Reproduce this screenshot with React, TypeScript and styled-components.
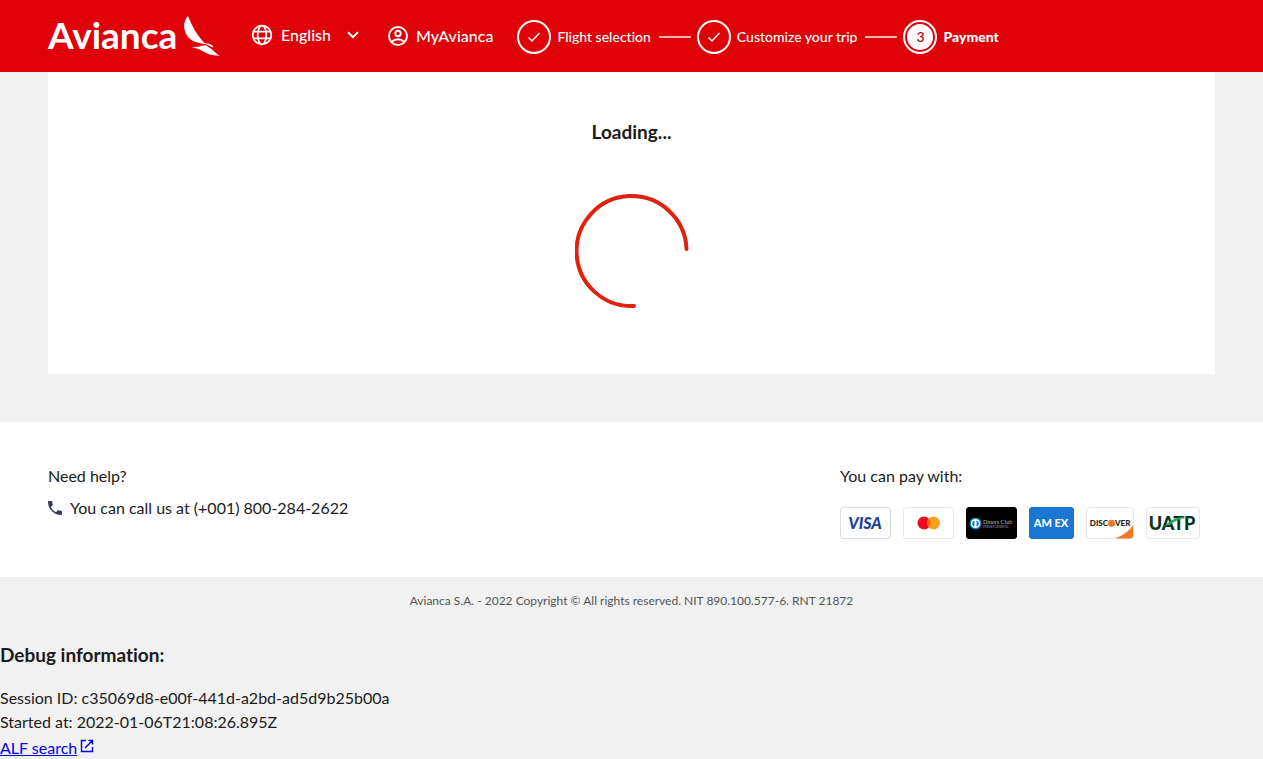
import React from "react";
import styled, { createGlobalStyle, css } from "styled-components";

const GlobalStyle = createGlobalStyle`
  *, *::before, *::after { box-sizing: border-box; }
  body {
    margin: 0;
    background: #f1f1f2;
    color: #1b1b1b;
    font-family: Lato, "Liberation Sans", sans-serif;
    font-size: 16px;
    line-height: 24px;
    font-variant-ligatures: none;
  }
  h1, h2, p, ol, ul { margin: 0; padding: 0; }
  ol, ul { list-style: none; }
  svg { display: block; flex: none; }
`;

const Header = styled.header`
  display: flex;
  align-items: center;
  height: 72px;
  padding: 0 48px 2px;
  background: #e00008;
  color: #fff;
`;

const Logo = styled.a`
  display: flex;
  align-items: center;
  gap: 6px;
  width: 172px;
  margin-right: 31px;
  padding-top: 2px;
  color: #fff;
  font-size: 37px;
  font-weight: 700;
  line-height: 40px;
  text-decoration: none;

  span { padding-bottom: 2px; }
`;

const Language = styled.label`
  display: grid;
  grid-template-columns: 22px auto 12px;
  align-items: center;
  column-gap: 8px;
  height: 24px;
  margin-right: 29px;
`;

const LanguageSelect = styled.select`
  grid-row: 1;
  grid-column: 2 / 4;
  appearance: none;
  height: 24px;
  margin: 0;
  padding: 0 28px 0 0;
  border: 0;
  background: transparent;
  color: inherit;
  font: 500 16px/24px Lato, sans-serif;
  cursor: pointer;
`;

const Chevron = styled.svg`
  grid-row: 1;
  grid-column: 3;
  pointer-events: none;
`;

const Account = styled.a`
  display: flex;
  align-items: center;
  gap: 8px;
  margin-right: 24px;
  padding-top: 2px;
  color: inherit;
  font-weight: 500;
  text-decoration: none;
`;

const Steps = styled.ol`
  display: flex;
  align-items: center;
  padding-top: 4px;
  font-size: 14px;
  line-height: 20px;

  li + li::before {
    content: "";
    width: 32px;
    height: 2px;
    margin-left: 8px;
    background: #ffb3b5;
  }
`;

const Step = styled.li<{ $current?: boolean }>`
  display: flex;
  align-items: center;
  gap: 6px;
  white-space: nowrap;
  font-weight: ${(p) => (p.$current ? 900 : 500)};
`;

const Marker = styled.span<{ $current?: boolean }>`
  display: flex;
  align-items: center;
  justify-content: center;
  width: 34px;
  height: 34px;
  border: 2px solid #fff;
  border-radius: 50%;
  font-weight: 500;
  ${(p) =>
    p.$current &&
    css`
      padding: 2px;
      background: #fff content-box;
      color: #c40008;
    `}
`;

const Panel = styled.main`
  display: flex;
  flex-direction: column;
  align-items: center;
  gap: 50px;
  margin: 0 48px 48px;
  padding: 48px 0 66px;
  background: #fff;
`;

const Heading = styled.h2`
  font-size: 19px;
  font-weight: 700;
  line-height: 24px;
`;

const Footer = styled.footer`
  display: flex;
  justify-content: space-between;
  padding: 42px 63px 38px 48px;
  background: #fff;
`;

const FooterColumn = styled.section`
  display: flex;
  flex-direction: column;
  gap: 8px;
`;

const Phone = styled.p`
  display: flex;
  align-items: center;
  gap: 8px;
`;

const Cards = styled.ul`
  display: flex;
  gap: 12px;
  padding-top: 11px;
`;

const Card = styled.li<{ $width: number; $bg?: string; $border?: string }>`
  display: flex;
  align-items: center;
  justify-content: center;
  width: ${(p) => p.$width}px;
  height: 32px;
  overflow: hidden;
  border-radius: 4px;
  background: ${(p) => p.$bg ?? "#fff"};
  box-shadow: inset 0 0 0 1px ${(p) => p.$border ?? "#e6e6e6"};
`;

const Copyright = styled.p`
  padding: 14px 16px 0;
  color: #555;
  font-size: 12px;
  line-height: 20px;
  text-align: center;
`;

const Debug = styled.section`
  padding-top: 32px;
`;

const DebugList = styled.div`
  padding-top: 19px;
`;

const SearchLink = styled.a`
  display: inline-flex;
  align-items: center;
  gap: 3px;
  height: 26px;
  color: #0000ee;
  text-decoration: none;

  span { padding-top: 2px; text-decoration: underline; }
  svg { margin-bottom: 2px; }
`;

const CardLabel = styled.text`
  font-family: Lato, sans-serif;
  font-weight: 900;
`;

const Check = () => (
  <svg width="14" height="12" viewBox="0 0 14 12" fill="none" stroke="#fff" strokeWidth="1.5" aria-hidden="true">
    <path d="M1.5 6.5 5 10 12.5 2" />
  </svg>
);

export default function App() {
  return (
    <>
      <GlobalStyle />
      <Header>
        <Logo href="#home">
          <span>Avianca</span>
          <svg width="37" height="42" viewBox="0 0 37 42" fill="#fff" aria-hidden="true">
            <path d="M5 1C1.500 5 .2 10 1.800 15.500c1.800 6 5.200 9.500 10.200 11.300L20.500 29l3 .2 6.300 3.200.3-1.400-2.600-1.800-6-1.300C16 22.500 12.500 17 9.300 10.500 7.800 7.500 6.500 4 5 1Z" />
            <path d="M8 32.300c4-.4 8-.3 11-1.500l4-.6 4.500 3c3.500 2.700 5.500 5.800 9.500 7.500-6 0-10-.7-14-2.700-4-2.200-8-5-15-5.700Z" />
          </svg>
        </Logo>
        <Language>
          <svg width="22" height="22" viewBox="0 0 22 22" fill="none" stroke="#fff" strokeWidth="1.800" aria-hidden="true">
            <circle cx="11" cy="11" r="9.300" />
            <ellipse cx="11" cy="11" rx="4.300" ry="9.300" />
            <path d="M2.500 7.700h17M2.500 14.300h17" />
          </svg>
          <LanguageSelect aria-label="Language" defaultValue="en">
            <option value="en">English</option>
          </LanguageSelect>
          <Chevron width="12" height="8" viewBox="0 0 12 8" fill="none" stroke="#fff" strokeWidth="2" aria-hidden="true">
            <path d="m1 1.200 5 5 5-5" />
          </Chevron>
        </Language>
        <Account href="#account">
          <svg width="20" height="20" viewBox="0 0 20 20" fill="none" stroke="#fff" strokeWidth="1.900" aria-hidden="true">
            <circle cx="10" cy="10" r="9" />
            <circle cx="10" cy="7.500" r="2.700" />
            <path d="M3.800 15.700c3.400-3.300 9-3.300 12.400 0" />
          </svg>
          MyAvianca
        </Account>
        <Steps>
          <Step>
            <Marker><Check /></Marker>
            Flight selection
          </Step>
          <Step>
            <Marker><Check /></Marker>
            Customize your trip
          </Step>
          <Step $current aria-current="step">
            <Marker $current>3</Marker>
            Payment
          </Step>
        </Steps>
      </Header>

      <Panel>
        <Heading>Loading...</Heading>
        <svg width="114" height="114" viewBox="0 0 114 114" fill="none" stroke="#e0210e" strokeWidth="4" strokeLinecap="round" role="img" aria-label="Loading">
          <path d="M111.500 55A55 55 0 1 0 59 112" />
        </svg>
      </Panel>

      <Footer>
        <FooterColumn>
          <p>Need help?</p>
          <Phone>
            <svg width="14" height="14" viewBox="3 3 18 18" fill="#343b58" aria-hidden="true">
              <path d="M6.620 10.790c1.440 2.830 3.760 5.140 6.590 6.590l2.200-2.200c.27-.27.67-.36 1.020-.24 1.120.37 2.330.57 3.570.57.55 0 1 .45 1 1V20c0 .55-.45 1-1 1-9.390 0-17-7.610-17-17 0-.55.450-1 1-1h3.500c.55 0 1 .450 1 1 0 1.250.200 2.450.570 3.570.110.350.030.740-.250 1.020z" />
            </svg>
            You can call us at (+001) 800-284-2622
          </Phone>
        </FooterColumn>
        <FooterColumn>
          <p>You can pay with:</p>
          <Cards>
            <Card $width={51} $border="#d8dadc">
              <svg width="51" height="32" viewBox="0 0 51 32" role="img" aria-label="Visa">
                <CardLabel x="25" y="22" textAnchor="middle" fill="#1b3f94" fontSize="16" fontStyle="italic">VISA</CardLabel>
              </svg>
            </Card>
            <Card $width={51}>
              <svg width="26" height="16" viewBox="0 0 26 16" role="img" aria-label="Mastercard">
                <circle cx="8" cy="8" r="6.500" fill="#eb0a1e" />
                <circle cx="17.500" cy="8" r="6.500" fill="#f9a01b" />
                <path d="M12.750 3.500a6.500 6.500 0 0 1 0 9 6.500 6.500 0 0 1 0-9Z" fill="#f96316" />
              </svg>
            </Card>
            <Card $width={51} $bg="#000" $border="#000">
              <svg width="51" height="32" viewBox="0 0 51 32" role="img" aria-label="Diners Club International">
                <circle cx="9.500" cy="16.500" r="6" fill="#1a83b8" />
                <circle cx="9.500" cy="16.500" r="4.600" fill="#fff" />
                <path d="M8.500 13.200v6.600a3.500 3.500 0 0 1 0-6.600ZM10.500 13.200v6.600a3.500 3.500 0 0 0 0-6.600Z" fill="#1a83b8" />
                <text x="17" y="17" fill="#bbb" fontSize="6" fontFamily="Liberation Serif, serif">Diners Club</text>
                <text x="17" y="21" fill="#888" fontSize="3" fontWeight="700" fontFamily="Liberation Serif, serif">INTERNATIONAL</text>
              </svg>
            </Card>
            <Card $width={45} $bg="#1976d2" $border="#1976d2">
              <svg width="45" height="32" viewBox="0 0 45 32" role="img" aria-label="American Express">
                <CardLabel x="22" y="20" textAnchor="middle" fill="#fff" fontSize="11">AM EX</CardLabel>
              </svg>
            </Card>
            <Card $width={48}>
              <svg width="48" height="32" viewBox="0 0 48 32" role="img" aria-label="Discover">
                <path d="M29 31.500c8-3 14-7 18-13.500v10.500a3 3 0 0 1-3 3Z" fill="#ef7622" />
                <CardLabel x="22" y="19" textAnchor="end" fill="#222" fontSize="8">DISC</CardLabel>
                <circle cx="25.500" cy="16.200" r="3.500" fill="#ef7622" />
                <CardLabel x="29" y="19" fill="#222" fontSize="8">VER</CardLabel>
              </svg>
            </Card>
            <Card $width={54}>
              <svg width="54" height="32" viewBox="0 0 54 32" role="img" aria-label="UATP">
                <CardLabel x="26" y="23" textAnchor="middle" fill="#0b2f20" fontSize="18">UATP</CardLabel>
                <path d="M16 20c6-1 6-10 26-10.500C30 12 24 19 16 20Z" fill="#22a84f" />
              </svg>
            </Card>
          </Cards>
        </FooterColumn>
      </Footer>

      <Copyright>Avianca S.A. - 2022 Copyright © All rights reserved. NIT 890.100.577-6. RNT 21872</Copyright>

      <Debug>
        <Heading>Debug information:</Heading>
        <DebugList>
          <p>Session ID: c35069d8-e00f-441d-a2bd-ad5d9b25b00a</p>
          <p>Started at: 2022-01-06T21:08:26.895Z</p>
          <SearchLink href="#alf">
            <span>ALF search</span>
            <svg width="14" height="14" viewBox="0 0 14 14" fill="none" stroke="#0000ee" strokeWidth="1.400" aria-hidden="true">
              <path d="M6 1.500H1.500v11h11V8M8.500 1.500h4v4M12.300 1.700 5 9" />
            </svg>
          </SearchLink>
        </DebugList>
      </Debug>
    </>
  );
}
